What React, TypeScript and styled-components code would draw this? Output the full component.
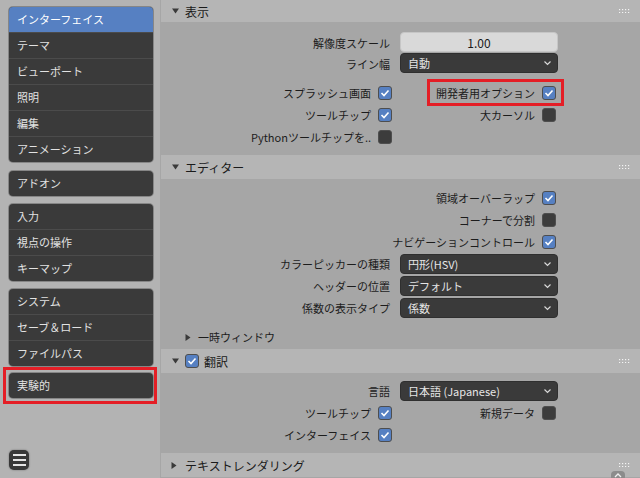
import styled, { createGlobalStyle } from 'styled-components';

const GlobalStyle = createGlobalStyle`
  html, body {
    margin: 0;
    padding: 0;
    background: #a6a6a6;
  }
  body {
    font-family: 'Noto Sans CJK JP', 'Noto Sans', sans-serif;
    font-size: 11px;
  }
`;

const Window = styled.div`
  position: relative;
  width: 640px;
  height: 478px;
  display: flex;
  overflow: hidden;
  background: #a6a6a6;
`;

const Sidebar = styled.div`
  width: 160px;
  flex-shrink: 0;
  box-sizing: border-box;
  padding: 7px 7px 8px 9px;
  display: flex;
  flex-direction: column;
  background: #b3b3b3;
`;

const NavGroup = styled.div<{ top?: number }>`
  margin-top: ${({ top }) => top || 0}px;
  background: #3a3a3a;
  border-radius: 4px;
  overflow: hidden;
  box-shadow: 0 0 0 1px rgba(0, 0, 0, 0.25);
`;

const NavItem = styled.div<{ active?: boolean }>`
  height: 25px;
  line-height: 25px;
  padding-left: 8px;
  color: ${({ active }) => (active ? '#ffffff' : '#e2e2e2')};
  background: ${({ active }) => (active ? '#5680c2' : 'transparent')};
  & + & {
    border-top: 1px solid #4b4b4b;
  }
`;

const Highlight = styled.div`
  margin: 1px 0 0 -6px;
  width: 154px;
  box-sizing: border-box;
  border: 3px solid #e41e26;
  padding: 3px 1px 3px 3px;
`;

const MenuButton = styled.div`
  margin-top: auto;
  width: 20px;
  height: 20px;
  border-radius: 5px;
  background: #383838;
  display: flex;
  flex-direction: column;
  justify-content: center;
  align-items: center;
  gap: 3px;
  box-shadow: 0 0 2px rgba(0, 0, 0, 0.4);
`;

const MenuBar = styled.span`
  width: 13px;
  height: 2px;
  background: #e4e4e4;
`;

const Main = styled.div`
  flex: 1;
  display: flex;
  flex-direction: column;
  padding-left: 1px;
`;

const Panel = styled.div<{ top?: number }>`
  margin-top: ${({ top }) => top || 0}px;
`;

const PanelHeader = styled.div<{ h: number; pad?: number }>`
  height: ${({ h }) => h}px;
  display: flex;
  align-items: center;
  gap: 6px;
  padding: 0 10px 0 ${({ pad }) => pad ?? 11}px;
  background: #b5b5b5;
  color: #1a1a1a;
  font-size: 12px;
`;

const HeaderCheck = styled.span`
  margin-right: -1px;
  display: flex;
`;

const Handle = styled.span`
  margin-left: auto;
  display: flex;
`;

const PanelBody = styled.div<{ pt: number; pb: number }>`
  padding: ${({ pt, pb }) => `${pt}px 0 ${pb}px`};
  background: #a6a6a6;
`;

const FieldRow = styled.div<{ h: number; top?: number; align?: string }>`
  height: ${({ h }) => h}px;
  margin-top: ${({ top }) => top || 0}px;
  display: grid;
  grid-template-columns: 229px 158px;
  column-gap: 10px;
  align-items: ${({ align }) => align || 'center'};
`;

const CheckRow = styled.div<{ top?: number }>`
  position: relative;
  height: 22px;
  margin-top: ${({ top }) => top || 0}px;
  display: grid;
  grid-template-columns: 210px 14px 136px 14px;
  column-gap: 7px;
  align-items: center;
`;

const Label = styled.span`
  justify-self: end;
  align-self: center;
  text-align: right;
  white-space: nowrap;
  color: #1c1c1c;
`;

const Box = styled.span<{ checked?: boolean }>`
  width: 14px;
  height: 14px;
  box-sizing: border-box;
  border-radius: 3px;
  border: 1px solid #4e4e4e;
  background: ${({ checked }) => (checked ? '#5680c2' : '#3c3c3c')};
  display: flex;
  align-items: center;
  justify-content: center;
`;

const Dropdown = styled.div`
  height: 20px;
  box-sizing: border-box;
  border-radius: 4px;
  border: 1px solid #2f2f2f;
  background: #3a3a3a;
  color: #e6e6e6;
  display: flex;
  align-items: center;
  justify-content: space-between;
  padding: 0 5px 0 7px;
`;

const NumberField = styled.div`
  height: 20px;
  box-sizing: border-box;
  border-radius: 4px;
  border: 1px solid #c6c6c6;
  background: #d9d9d9;
  color: #1a1a1a;
  display: flex;
  align-items: center;
  justify-content: center;
  font-size: 12px;
`;

const SubRow = styled.div`
  margin-top: 8px;
  height: 20px;
  display: flex;
  align-items: center;
  gap: 7px;
  padding-left: 24px;
  color: #1c1c1c;
`;

const RedBox = styled.div`
  position: absolute;
  left: 266px;
  top: -3px;
  width: 137px;
  height: 27px;
  box-sizing: border-box;
  border: 3px solid #e41e26;
`;

const ScrollUp = styled.div`
  position: absolute;
  left: 611px;
  top: 471px;
  width: 14px;
  height: 14px;
  border-radius: 4px;
  background: #8c8c8c;
  display: flex;
  justify-content: center;
  padding-top: 2px;
  box-sizing: border-box;
`;

const Check = ({ checked }: { checked?: boolean }) => (
  <Box checked={checked}>
    {checked && (
      <svg width="10" height="10" viewBox="0 0 10 10">
        <polyline points="1.5,5 4,7.5 8.5,2.5" fill="none" stroke="#ffffff" strokeWidth="1.6" />
      </svg>
    )}
  </Box>
);

const Chevron = () => (
  <svg width="9" height="6" viewBox="0 0 9 6">
    <polyline points="1.5,1.5 4.5,4.5 7.5,1.5" fill="none" stroke="#d8d8d8" strokeWidth="1.2" />
  </svg>
);

const Open = () => (
  <svg width="7" height="6" viewBox="0 0 7 6">
    <polygon points="0,0.5 7,0.5 3.5,5.5" fill="#3a3a3a" />
  </svg>
);

const Closed = () => (
  <svg width="6" height="7" viewBox="0 0 6 7">
    <polygon points="0.5,0 5.5,3.5 0.5,7" fill="#3a3a3a" />
  </svg>
);

const Dots = () => (
  <svg width="11" height="4" viewBox="0 0 11 4">
    {[0, 3, 6, 9].map((x) =>
      [0, 3].map((y) => <rect key={`${x}-${y}`} x={x} y={y} width="1.2" height="1.2" fill="#f4f4f4" />),
    )}
  </svg>
);

const App = () => {
  return (
    <>
      <GlobalStyle />
      <Window>
        <Sidebar>
          <NavGroup>
            <NavItem active>インターフェイス</NavItem>
            <NavItem>テーマ</NavItem>
            <NavItem>ビューポート</NavItem>
            <NavItem>照明</NavItem>
            <NavItem>編集</NavItem>
            <NavItem>アニメーション</NavItem>
          </NavGroup>
          <NavGroup top={9}>
            <NavItem>アドオン</NavItem>
          </NavGroup>
          <NavGroup top={8}>
            <NavItem>入力</NavItem>
            <NavItem>視点の操作</NavItem>
            <NavItem>キーマップ</NavItem>
          </NavGroup>
          <NavGroup top={8}>
            <NavItem>システム</NavItem>
            <NavItem>セーブ＆ロード</NavItem>
            <NavItem>ファイルパス</NavItem>
          </NavGroup>
          <Highlight>
            <NavGroup>
              <NavItem>実験的</NavItem>
            </NavGroup>
          </Highlight>
          <MenuButton>
            <MenuBar />
            <MenuBar />
            <MenuBar />
          </MenuButton>
        </Sidebar>

        <Main>
          <Panel>
            <PanelHeader h={22}>
              <Open />
              表示
              <Handle>
                <Dots />
              </Handle>
            </PanelHeader>
            <PanelBody pt={10} pb={4}>
              <FieldRow h={21} align="start">
                <Label>解像度スケール</Label>
                <NumberField>1.00</NumberField>
              </FieldRow>
              <FieldRow h={21} align="start">
                <Label>ライン幅</Label>
                <Dropdown>
                  自動
                  <Chevron />
                </Dropdown>
              </FieldRow>
              <CheckRow top={8}>
                <Label>スプラッシュ画面</Label>
                <Check checked />
                <Label>開発者用オプション</Label>
                <Check checked />
                <RedBox />
              </CheckRow>
              <CheckRow>
                <Label>ツールチップ</Label>
                <Check checked />
                <Label>大カーソル</Label>
                <Check />
              </CheckRow>
              <CheckRow>
                <Label>Pythonツールチップを..</Label>
                <Check />
              </CheckRow>
            </PanelBody>
          </Panel>

          <Panel top={3}>
            <PanelHeader h={24}>
              <Open />
              エディター
              <Handle>
                <Dots />
              </Handle>
            </PanelHeader>
            <PanelBody pt={8} pb={0}>
              <CheckRow>
                <span />
                <span />
                <Label>領域オーバーラップ</Label>
                <Check checked />
              </CheckRow>
              <CheckRow>
                <span />
                <span />
                <Label>コーナーで分割</Label>
                <Check />
              </CheckRow>
              <CheckRow>
                <span />
                <span />
                <Label>ナビゲーションコントロール</Label>
                <Check checked />
              </CheckRow>
              <FieldRow h={22}>
                <Label>カラーピッカーの種類</Label>
                <Dropdown>
                  円形(HSV)
                  <Chevron />
                </Dropdown>
              </FieldRow>
              <FieldRow h={22}>
                <Label>ヘッダーの位置</Label>
                <Dropdown>
                  デフォルト
                  <Chevron />
                </Dropdown>
              </FieldRow>
              <FieldRow h={22}>
                <Label>係数の表示タイプ</Label>
                <Dropdown>
                  係数
                  <Chevron />
                </Dropdown>
              </FieldRow>
              <SubRow>
                <Closed />
                一時ウィンドウ
              </SubRow>
            </PanelBody>
          </Panel>

          <Panel top={2}>
            <PanelHeader h={24}>
              <Open />
              <HeaderCheck>
                <Check checked />
              </HeaderCheck>
              翻訳
              <Handle>
                <Dots />
              </Handle>
            </PanelHeader>
            <PanelBody pt={7} pb={6}>
              <FieldRow h={22}>
                <Label>言語</Label>
                <Dropdown>
                  日本語 (Japanese)
                  <Chevron />
                </Dropdown>
              </FieldRow>
              <CheckRow>
                <Label>ツールチップ</Label>
                <Check checked />
                <Label>新規データ</Label>
                <Check />
              </CheckRow>
              <CheckRow>
                <Label>インターフェイス</Label>
                <Check checked />
              </CheckRow>
            </PanelBody>
          </Panel>

          <Panel top={1}>
            <PanelHeader h={24} pad={10}>
              <Closed />
              <span style={{ marginLeft: 2 }}>テキストレンダリング</span>
              <Handle>
                <Dots />
              </Handle>
            </PanelHeader>
          </Panel>
        </Main>

        <ScrollUp>
          <svg width="8" height="5" viewBox="0 0 8 5">
            <polyline points="1,4 4,1 7,4" fill="none" stroke="#eeeeee" strokeWidth="1.3" />
          </svg>
        </ScrollUp>
      </Window>
    </>
  );
};

export default App;
